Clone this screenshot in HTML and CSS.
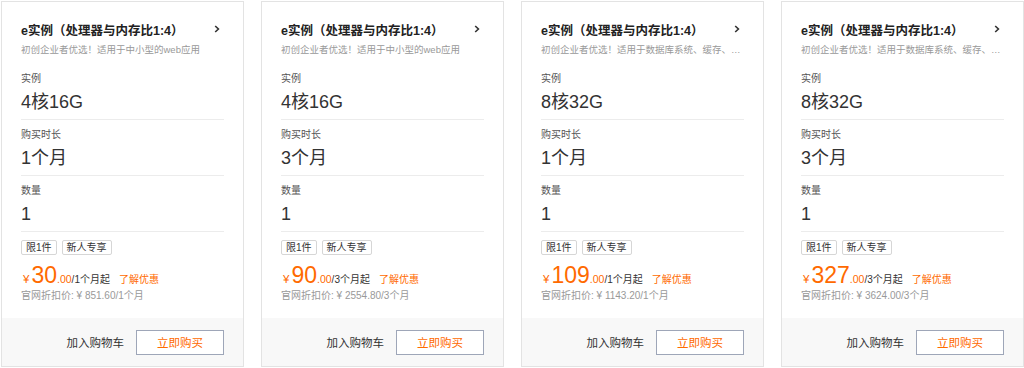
FILE: index.html
```html
<!DOCTYPE html>
<html lang="zh-CN">

<head>
    <meta charset="UTF-8" />
    <meta name="viewport" content="width=device-width, initial-scale=1.0" />
    <title>e实例</title>
    <link rel="stylesheet" href="styles.css">
</head>

<body>
    <div class="cards">
        <div class="card">
            <div class="body">
                <div class="head">
                    <span class="title">e实例（处理器与内存比1:4）</span>
                    <svg class="arrow" width="6" height="8" viewBox="0 0 6 8"><path d="M1.2 1 L4.4 4 L1.2 7" fill="none" stroke="#333" stroke-width="1.6" /></svg>
                </div>
                <div class="sub">初创企业者优选！适用于中小型的web应用</div>
                <div class="row"><div class="label">实例</div><div class="value">4核16G</div></div>
                <div class="row"><div class="label">购买时长</div><div class="value">1个月</div></div>
                <div class="row"><div class="label">数量</div><div class="value">1</div></div>
                <div class="tags"><span class="tag">限1件</span><span class="tag">新人专享</span></div>
                <div class="price">
                    <span class="yen">¥</span><span class="num">30</span><span class="dec">.00</span><span class="unit">/1个月起</span><a class="more">了解优惠</a>
                </div>
                <div class="orig">官网折扣价: ¥ 851.60/1个月</div>
            </div>
            <div class="foot">
                <span class="cart">加入购物车</span>
                <button class="buy">立即购买</button>
            </div>
        </div>
        <div class="card">
            <div class="body">
                <div class="head">
                    <span class="title">e实例（处理器与内存比1:4）</span>
                    <svg class="arrow" width="6" height="8" viewBox="0 0 6 8"><path d="M1.2 1 L4.4 4 L1.2 7" fill="none" stroke="#333" stroke-width="1.6" /></svg>
                </div>
                <div class="sub">初创企业者优选！适用于中小型的web应用</div>
                <div class="row"><div class="label">实例</div><div class="value">4核16G</div></div>
                <div class="row"><div class="label">购买时长</div><div class="value">3个月</div></div>
                <div class="row"><div class="label">数量</div><div class="value">1</div></div>
                <div class="tags"><span class="tag">限1件</span><span class="tag">新人专享</span></div>
                <div class="price">
                    <span class="yen">¥</span><span class="num">90</span><span class="dec">.00</span><span class="unit">/3个月起</span><a class="more">了解优惠</a>
                </div>
                <div class="orig">官网折扣价: ¥ 2554.80/3个月</div>
            </div>
            <div class="foot">
                <span class="cart">加入购物车</span>
                <button class="buy">立即购买</button>
            </div>
        </div>
        <div class="card">
            <div class="body">
                <div class="head">
                    <span class="title">e实例（处理器与内存比1:4）</span>
                    <svg class="arrow" width="6" height="8" viewBox="0 0 6 8"><path d="M1.2 1 L4.4 4 L1.2 7" fill="none" stroke="#333" stroke-width="1.6" /></svg>
                </div>
                <div class="sub">初创企业者优选！适用于数据库系统、缓存、…</div>
                <div class="row"><div class="label">实例</div><div class="value">8核32G</div></div>
                <div class="row"><div class="label">购买时长</div><div class="value">1个月</div></div>
                <div class="row"><div class="label">数量</div><div class="value">1</div></div>
                <div class="tags"><span class="tag">限1件</span><span class="tag">新人专享</span></div>
                <div class="price">
                    <span class="yen">¥</span><span class="num">109</span><span class="dec">.00</span><span class="unit">/1个月起</span><a class="more">了解优惠</a>
                </div>
                <div class="orig">官网折扣价: ¥ 1143.20/1个月</div>
            </div>
            <div class="foot">
                <span class="cart">加入购物车</span>
                <button class="buy">立即购买</button>
            </div>
        </div>
        <div class="card">
            <div class="body">
                <div class="head">
                    <span class="title">e实例（处理器与内存比1:4）</span>
                    <svg class="arrow" width="6" height="8" viewBox="0 0 6 8"><path d="M1.2 1 L4.4 4 L1.2 7" fill="none" stroke="#333" stroke-width="1.6" /></svg>
                </div>
                <div class="sub">初创企业者优选！适用于数据库系统、缓存、…</div>
                <div class="row"><div class="label">实例</div><div class="value">8核32G</div></div>
                <div class="row"><div class="label">购买时长</div><div class="value">3个月</div></div>
                <div class="row"><div class="label">数量</div><div class="value">1</div></div>
                <div class="tags"><span class="tag">限1件</span><span class="tag">新人专享</span></div>
                <div class="price">
                    <span class="yen">¥</span><span class="num">327</span><span class="dec">.00</span><span class="unit">/3个月起</span><a class="more">了解优惠</a>
                </div>
                <div class="orig">官网折扣价: ¥ 3624.00/3个月</div>
            </div>
            <div class="foot">
                <span class="cart">加入购物车</span>
                <button class="buy">立即购买</button>
            </div>
        </div>
    </div>
</body>

</html>
```

FILE: styles.css
```css
* {
    margin: 0;
    padding: 0;
    box-sizing: border-box;
    font-family: "Liberation Sans", "Noto Sans CJK SC", sans-serif;
}

body {
    padding: 1px 0 0 1px;
    background: #fff;
    color: #333;
}

.cards {
    display: flex;
    gap: 17px;
}

.card {
    width: 243px;
    height: 366px;
    border: 1px solid #e3e3e3;
    display: flex;
    flex-direction: column;
}

.body {
    flex: 1;
    padding: 17px 19px 0 19px;
}

.head {
    display: flex;
    align-items: center;
    justify-content: space-between;
    height: 20px;
    padding-right: 4px;
}

.title {
    font-size: 12.5px;
    font-weight: bold;
    color: #222;
}

.sub {
    margin-top: 4px;
    font-size: 9.5px;
    line-height: 14px;
    color: #999;
    white-space: nowrap;
    overflow: hidden;
    margin-bottom: 7px;
}

.row {
    padding: 8px 0 4px;
    border-bottom: 1px solid #ececec;
}

.label {
    font-size: 10px;
    line-height: 14px;
    color: #555;
}

.value {
    margin-top: 3px;
    font-size: 18px;
    line-height: 26px;
    color: #333;
}

.tags {
    display: flex;
    gap: 5px;
    margin-top: 8px;
}

.tag {
    font-size: 10px;
    line-height: 13px;
    padding: 0 4px;
    border: 1px solid #d6d6d6;
    border-radius: 2px;
    color: #333;
}

.price {
    display: flex;
    align-items: baseline;
    margin-top: 7px;
    height: 26px;
    line-height: 26px;
    color: #ff6a00;
}

.yen {
    font-size: 11.5px;
    margin: 0 2px 0 2px;
}

.num {
    font-size: 23px;
}

.dec {
    font-size: 10.5px;
}

.unit {
    font-size: 10px;
    color: #333;
}

.more {
    font-size: 10px;
    margin-left: 9px;
    color: #ff6a00;
}

.orig {
    margin-top: 1px;
    font-size: 10px;
    line-height: 14px;
    color: #999;
}

.foot {
    height: 48px;
    background: #f8f8f8;
    display: flex;
    align-items: center;
    justify-content: flex-end;
    gap: 12px;
    padding-right: 19px;
}

.cart {
    font-size: 11.5px;
    color: #333;
}

.buy {
    width: 88px;
    height: 25px;
    border: 1px solid #9ea6b8;
    background: #fff;
    color: #ff6a00;
    font-size: 11.5px;
    cursor: pointer;
}
```
